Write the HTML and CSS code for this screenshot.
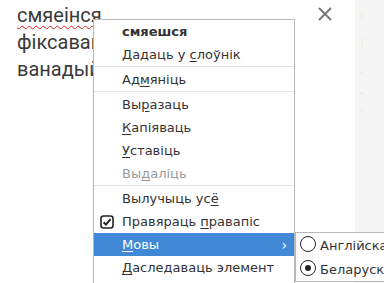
FILE: index.html
```html
<!DOCTYPE html>
<html>
	<head>
		<link rel="stylesheet" href="styles.css">
	</head>
	<body>
		<div class="page">
			<div class="editor">
				<p class="line"><span class="misspelt">смяеінся</span></p>
				<p class="line">фіксавацца</p>
				<p class="line">ванадый</p>
			</div>
			<div class="close">
				<svg viewBox="0 0 16 16" width="16" height="16">
					<path d="M2 2L14 14M14 2L2 14" stroke="#777" stroke-width="2" fill="none"/>
				</svg>
			</div>
			<div class="side">
				<span class="dot yellow">(</span>
				<span class="dot yellow">(</span>
				<span class="dot grey">.</span>
				<span class="dot grey">.</span>
				<span class="dot grey">·</span>
			</div>
		</div>

		<ul class="menu">
			<li class="item bold"><span>смяешся</span></li>
			<li class="item"><span>Дадаць у <u>с</u>лоўнік</span></li>
			<li class="sep"></li>
			<li class="item"><span>Ад<u>м</u>яніць</span></li>
			<li class="sep"></li>
			<li class="item"><span>Вы<u>р</u>азаць</span></li>
			<li class="item"><span><u>К</u>апіяваць</span></li>
			<li class="item"><span><u>У</u>ставіць</span></li>
			<li class="item disabled"><span>Вы<u>д</u>аліць</span></li>
			<li class="sep"></li>
			<li class="item"><span>Вылучыць ус<u>ё</u></span></li>
			<li class="item">
				<span class="check">
					<svg viewBox="0 0 14 14" width="14" height="14">
						<rect x="1" y="1" width="12" height="12" rx="2.5" fill="#fff" stroke="#222" stroke-width="1.6"/>
						<path d="M3.6 7.2L6 9.6L10.6 4.2" stroke="#222" stroke-width="2" fill="none"/>
					</svg>
				</span>
				<span>Правяраць <u>п</u>равапіс</span>
			</li>
			<li class="item active"><span><u>М</u>овы</span><span class="arrow">›</span></li>
			<li class="item"><span><u>Д</u>аследаваць элемент</span></li>
		</ul>

		<ul class="submenu">
			<li class="item">
				<span class="radio"></span>
				<span>Англійская</span>
			</li>
			<li class="item">
				<span class="radio on"></span>
				<span>Беларуская</span>
			</li>
		</ul>
	</body>
</html>
```

FILE: styles.css
```css
*{
	margin: 0;
	padding: 0;
	box-sizing: border-box;
}
html,body{
	height: 100%;
	width: 100%;
	overflow: hidden;
	background: #fff;
}
.page{
	display: flex;
	flex-direction: row;
	height: 100%;
}
.editor{
	width: 300px;
	padding: 2px 0 0 17px;
	font-family: Roboto, "Liberation Sans", sans-serif;
	font-size: 20px;
	line-height: 27px;
	color: #3a3a3a;
	white-space: nowrap;
	overflow: hidden;
}
.misspelt{
	text-decoration: underline wavy #d22;
	text-decoration-thickness: 1px;
	text-underline-offset: 3px;
	text-decoration-skip-ink: none;
}
.close{
	width: 55px;
	padding: 6px 0 0 17px;
}
.side{
	flex: 1;
	background: #f5f5f5;
	display: flex;
	flex-direction: column;
	padding: 8px 0 0 5px;
	font-family: "DejaVu Sans", sans-serif;
	font-size: 11px;
	line-height: 14px;
}
.dot{
	height: 28px;
}
.yellow{
	color: #f0ecc8;
}
.grey{
	color: #d8d8d8;
	height: 20px;
}
.menu, .submenu{
	list-style: none;
	position: absolute;
	background: #fff;
	border: 1px solid #b8b8b8;
	font-family: "DejaVu Sans", sans-serif;
	font-size: 13px;
	color: #333;
}
.menu{
	left: 93px;
	top: 19px;
	width: 202px;
	height: 275px;
}
.submenu{
	left: 295px;
	top: 232px;
	width: 120px;
}
.item{
	height: 23px;
	display: flex;
	align-items: center;
	padding-left: 28px;
	position: relative;
	white-space: nowrap;
}
.bold{
	font-weight: bold;
}
.disabled{
	color: #999;
}
.sep{
	height: 1px;
	margin-bottom: 1px;
	background: #e2e2e2;
}
.active{
	background: #4189d6;
	color: #fff;
}
.arrow{
	position: absolute;
	right: 7px;
	font-size: 14px;
}
.check{
	position: absolute;
	left: 6px;
	top: 5px;
	height: 14px;
}
u{
	text-underline-offset: 2px;
}
.submenu .item{
	height: 24px;
	padding-left: 24px;
}
.radio{
	position: absolute;
	left: 4px;
	top: 3px;
	width: 16px;
	height: 16px;
	border: 1.3px solid #222;
	border-radius: 50%;
}
.radio.on::after{
	content: "";
	position: absolute;
	left: 4px;
	top: 4px;
	width: 6px;
	height: 6px;
	border-radius: 50%;
	background: #222;
}
```
